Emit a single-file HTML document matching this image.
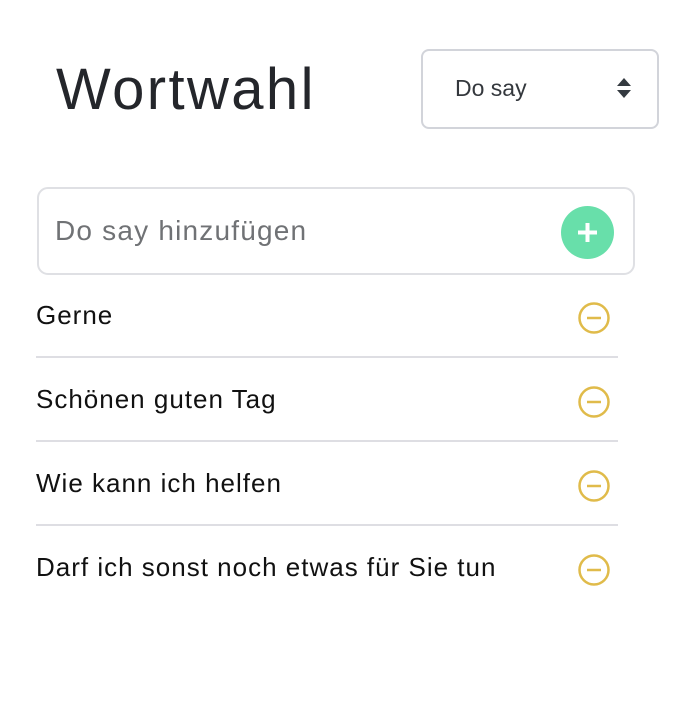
<!DOCTYPE html>
<html><head><style>
body{margin:0;width:674px;height:706px;background:#fff;font-family:"Liberation Sans",sans-serif;position:relative;overflow:hidden}
.a{position:absolute}
h1{position:absolute;left:56px;top:55px;margin:0;font-weight:normal;font-size:58px;line-height:70px;color:#24262b;letter-spacing:2.4px}
.sel{left:421px;top:49px;width:234px;height:76px;border:2px solid #d2d4da;border-radius:8px}
.sel span{position:absolute;left:32px;top:24px;font-size:23px;color:#34383d}
.inp{left:37px;top:187px;width:594px;height:84px;border:2px solid #dfe0e4;border-radius:11px}
.inp span{position:absolute;left:16px;top:26px;font-size:28px;color:#707275;letter-spacing:1.2px}
.plus{left:561px;top:206px;width:53px;height:53px;border-radius:50%;background:#68dfaa}
.row{left:36px;width:582px;height:84px}
.row span{position:absolute;left:0;font-size:26px;color:#111;top:0px;letter-spacing:1px}
.sep{left:36px;width:582px;height:2px;background:#dedee3}
</style></head><body>
<h1>Wortwahl</h1>
<div class="a sel"><span>Do say</span>
<svg class="a" style="left:193px;top:26px" width="16" height="22"><path d="M1 9 L8 1 L15 9Z M1 13 L8 21 L15 13Z" fill="#343a40"/></svg></div>
<div class="a inp"><span>Do say hinzufügen</span></div>
<div class="a plus"><svg width="53" height="53"><path d="M26.5 17v19M17 26.5h19" stroke="#fff" stroke-width="4"/></svg></div>
<div class="a row" style="top:300px"><span>Gerne</span></div>
<div class="a sep" style="top:356px"></div>
<div class="a row" style="top:384px"><span>Schönen guten Tag</span></div>
<div class="a sep" style="top:440px"></div>
<div class="a row" style="top:468px"><span>Wie kann ich helfen</span></div>
<div class="a sep" style="top:524px"></div>
<div class="a row" style="top:552px"><span>Darf ich sonst noch etwas für Sie tun</span></div>
<svg class="a" style="left:576px;top:300px" width="36" height="290">
<g fill="none" stroke="#e0bb4a" stroke-width="2.5">
<circle cx="18" cy="18" r="14.5"/><path d="M11 18h14"/>
<circle cx="18" cy="102" r="14.5"/><path d="M11 102h14"/>
<circle cx="18" cy="186" r="14.5"/><path d="M11 186h14"/>
<circle cx="18" cy="270" r="14.5"/><path d="M11 270h14"/>
</g></svg>
</body></html>
